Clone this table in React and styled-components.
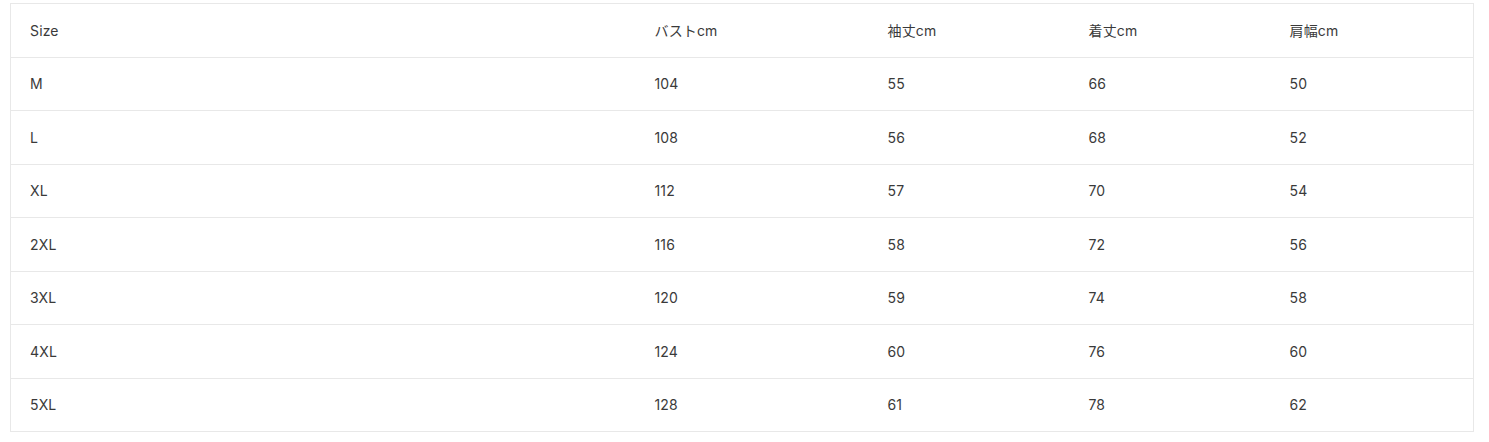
import React from "react";
import styled, { createGlobalStyle } from "styled-components";

const GlobalStyle = createGlobalStyle`
  html, body { margin: 0; padding: 0; background: #ffffff; }
  body {
    font-family: Inter, "Noto Sans", "Noto Sans CJK JP", sans-serif;
    color: #333333;
  }
`;

const Page = styled.div`
  padding: 3px 0 0 10px;
`;

const Table = styled.table`
  width: 1463px;
  table-layout: fixed;
  border-collapse: collapse;
  border: 1px solid #e8e8e8;
`;

const Cell = styled.td`
  padding: 1px 0 0 19px;
  height: 53.5px;
  box-sizing: border-box;
  border-top: 1px solid #e8e8e8;
  font-size: 14px;
  line-height: 20px;
  font-weight: 400;
  color: #3a3a3a;
  letter-spacing: 0.15px;
  vertical-align: middle;
  font-family: Inter, "Noto Sans CJK JP", sans-serif;
`;

const widths = [625, 233, 201, 201, 203];

const header = ["Size", "バストcm", "袖丈cm", "着丈cm", "肩幅cm"];
const rows = [
  ["M", "104", "55", "66", "50"],
  ["L", "108", "56", "68", "52"],
  ["XL", "112", "57", "70", "54"],
  ["2XL", "116", "58", "72", "56"],
  ["3XL", "120", "59", "74", "58"],
  ["4XL", "124", "60", "76", "60"],
  ["5XL", "128", "61", "78", "62"],
];

export default function App() {
  return (
    <>
      <GlobalStyle />
      <Page>
        <Table>
          <colgroup>
            {widths.map((w, i) => (
              <col key={i} style={{ width: w }} />
            ))}
          </colgroup>
          <tbody>
            <tr>
              {header.map((h) => (
                <Cell key={h}>{h}</Cell>
              ))}
            </tr>
            {rows.map((r) => (
              <tr key={r[0]}>
                {r.map((c, i) => (
                  <Cell key={i}>{c}</Cell>
                ))}
              </tr>
            ))}
          </tbody>
        </Table>
      </Page>
    </>
  );
}
